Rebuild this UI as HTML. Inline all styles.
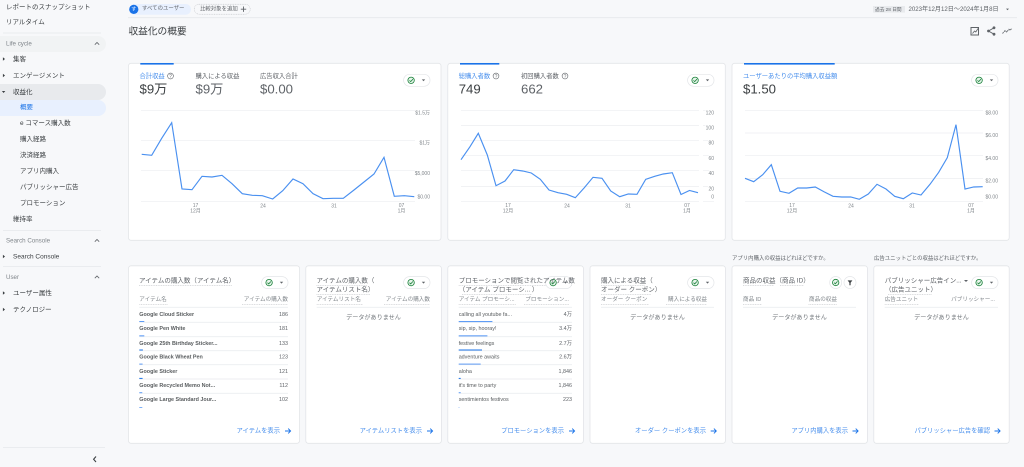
<!DOCTYPE html>
<html lang="ja"><head><meta charset="utf-8"><title>収益化の概要</title>
<style>
html,body{margin:0;padding:0;width:1024px;height:467px;overflow:hidden;background:#f7f8fa}
svg{display:block;filter:blur(.3px)}
text{font-family:"Liberation Sans","Noto Sans CJK JP",sans-serif;dominant-baseline:central;fill:#5f6368;font-size:6.3px;transform:translateY(.6px)}
.n{fill:#3c4043;font-size:6.5px}
.s{fill:#80868b;font-size:5px}
.h{fill:#80868b;font-size:6.2px}
.a{fill:#5f6368;font-size:5.6px}
.tt{fill:#5f6368;font-size:6.5px}
.b{fill:#1a73e8;font-size:6.3px;opacity:.8}
.m{fill:#3c4043;font-size:13.2px}
.g{fill:#5f6368;font-size:13.2px}
.r{fill:#3c4043;font-size:5.4px;font-weight:bold;opacity:.85}
.v{fill:#5f6368;font-size:5.4px}
.e{text-anchor:end}
.c{text-anchor:middle}
.card{fill:#fff;stroke:#e3e5e8;stroke-width:.8}
.grid{stroke:#eceef0;stroke-width:.7}
.line{fill:none;stroke:#4a90f0;stroke-width:1.15}
.dv{stroke:#e6e8eb;stroke-width:.8}
.dot{stroke:#b5b8bc;stroke-width:.5;stroke-dasharray:1 .7}
.rl{stroke:#eceef0;stroke-width:.9}
.bar{fill:#5f9cf5}
</style></head>
<body>
<svg width="1024" height="467" viewBox="0 0 1024 467" xmlns="http://www.w3.org/2000/svg">
<defs>
<g id="pill"><rect x=".3" y=".3" width="26.4" height="12" rx="6" fill="#fff" stroke="#e3e5e8" stroke-width=".7"/><circle cx="7.8" cy="6.3" r="3.2" fill="#e6f4ea" stroke="#188038" stroke-width=".8"/><path d="M6.2 6.4l1.2 1.2 2.2-2.4" fill="none" stroke="#188038" stroke-width=".8"/><path d="M18.5 5.4h3.4l-1.7 1.9z" fill="#5f6368"/></g>
<g id="help"><circle r="2.9" fill="none" stroke="#5f6368" stroke-width=".6"/><path d="M-1-.8a1 1 0 1 1 1.6.8c-.4.3-.6.5-.6 1M0 1.6v.4" fill="none" stroke="#5f6368" stroke-width=".5"/></g>
<path id="arrow" d="M-3 0H2.4M.2-2.4L2.6 0 .2 2.4" fill="none" stroke="#1a73e8" stroke-width=".9"/>
<path id="tri" d="M-1.1-1.7L1 0l-2.1 1.7z" fill="#3c4043"/>
<path id="up" d="M-2.2 1.2L0-1l2.2 2.2" fill="none" stroke="#5f6368" stroke-width=".8"/>
</defs>

<!-- sidebar -->
<text x="6" y="7" class="n">レポートのスナップショット</text>
<text x="6" y="22" class="n">リアルタイム</text>
<line x1="3" y1="33" x2="101" y2="33" class="dv"/>
<path d="M0 36H98a8 8 0 0 1 0 16H0z" fill="#f1f3f4"/>
<text x="6" y="43.5" class="h">Life cycle</text><use href="#up" x="97" y="43.5"/>
<use href="#tri" x="4" y="59"/><text x="13" y="59" class="n">集客</text>
<use href="#tri" x="4" y="75.5"/><text x="13" y="75.5" class="n">エンゲージメント</text>
<path d="M0 84H98a8 8 0 0 1 0 16H0z" fill="#e8eaed"/>
<path d="M2.4 91l1.7 2 1.7-2z" transform="translate(-.5 0)" fill="#3c4043"/><text x="13" y="92" class="n">収益化</text>
<path d="M0 100H98a8 8 0 0 1 0 16H0z" fill="#e8f0fe"/>
<text x="20" y="107" class="n" style="fill:#1a73e8">概要</text>
<text x="20" y="123" class="n">e コマース購入数</text>
<text x="20" y="139" class="n">購入経路</text>
<text x="20" y="155" class="n">決済経路</text>
<text x="20" y="171" class="n">アプリ内購入</text>
<text x="20" y="187" class="n">パブリッシャー広告</text>
<text x="20" y="203" class="n">プロモーション</text>
<text x="13" y="219" class="n">維持率</text>
<line x1="3" y1="230.5" x2="101" y2="230.5" class="dv"/>
<text x="6" y="240.5" class="h">Search Console</text><use href="#up" x="97" y="240.5"/>
<use href="#tri" x="4" y="256.5"/><text x="13" y="256.5" class="n">Search Console</text>
<line x1="3" y1="266.5" x2="101" y2="266.5" class="dv"/>
<text x="6" y="277" class="h">User</text><use href="#up" x="97" y="277"/>
<use href="#tri" x="4" y="293"/><text x="13" y="293" class="n">ユーザー属性</text>
<use href="#tri" x="4" y="309.5"/><text x="13" y="309.5" class="n">テクノロジー</text>
<line x1="3" y1="447.5" x2="105" y2="447.5" class="dv"/>
<path d="M96 456.5L93.6 459.3 96 462" fill="none" stroke="#3c4043" stroke-width="1.1"/>

<!-- top bar -->
<rect x="129" y="4" width="62" height="10.7" rx="5.3" fill="#e8f0fe"/>
<circle cx="133.8" cy="9.4" r="4.6" fill="#1a73e8"/><text x="133.8" y="9" class="c" style="font-size:5px;fill:#fff">す</text>
<text x="142" y="8.5" style="font-size:5.4px">すべてのユーザー</text>
<rect x="194.2" y="4.2" width="56" height="10" rx="5" fill="none" stroke="#b5b8bc" stroke-width=".5" stroke-dasharray="1 .7"/>
<text x="200" y="8.7" style="font-size:5.4px">比較対象を追加</text>
<path d="M243.5 6.5v5.4M240.8 9.2h5.4" stroke="#5f6368" stroke-width=".9"/>
<line x1="128" y1="17.7" x2="1017" y2="17.7" class="dv"/>
<rect x="873" y="6" width="32" height="6.6" fill="#e8eaed"/>
<text x="875" y="8.8" style="font-size:4.7px">過去 28 日間</text>
<text x="908.5" y="8.9" style="font-size:6.1px">2023年12月12日～2024年1月8日</text>
<path d="M1006 8.6h3l-1.5 1.7z" fill="#5f6368"/>
<text x="128.5" y="31.2" style="font-size:9.7px;fill:#3c4043">収益化の概要</text>
<g fill="none" stroke="#5f6368" stroke-width=".9">
<rect x="971" y="27.5" width="7.5" height="7.5" stroke-width="1"/><path d="M972.5 33.5l2-2.5 1.3 1 2.2-3.5" stroke-width=".8"/>
<path d="M994 27.8L988.5 31l5.5 3.2" />
</g>
<circle cx="994" cy="27.8" r="1.4" fill="#5f6368"/><circle cx="988.5" cy="31" r="1.4" fill="#5f6368"/><circle cx="994" cy="34.2" r="1.4" fill="#5f6368"/>
<path d="M1002.5 33.5l2.6-3 1.6 1.5 2.2-2.7 1.2 1 1.8-2" fill="none" stroke="#5f6368" stroke-width=".9" stroke-dasharray="1.7 .6"/>

<!-- metric cards -->
<rect x="128.5" y="63.3" width="312.5" height="177" rx="2.5" class="card"/>
<rect x="447.8" y="63.3" width="277.5" height="177" rx="2.5" class="card"/>
<rect x="732" y="63.3" width="277.2" height="177" rx="2.5" class="card"/>
<rect x="140.3" y="63" width="33.4" height="1.6" fill="#1a73e8"/>
<rect x="460" y="63" width="39.3" height="1.6" fill="#1a73e8"/>
<rect x="744" y="63" width="90.7" height="1.6" fill="#1a73e8"/>

<text x="139.5" y="76" class="b">合計収益</text><use href="#help" x="170.5" y="76"/>
<text x="139.5" y="88.5" class="m">$9万</text>
<text x="195.5" y="76">購入による収益</text><text x="195.5" y="88.5" class="g">$9万</text>
<text x="260" y="76">広告収入合計</text><text x="260" y="88.5" class="g">$0.00</text>

<text x="458.7" y="76" class="b">総購入者数</text><use href="#help" x="496" y="76"/>
<text x="458.7" y="88.5" class="m">749</text>
<text x="521" y="76">初回購入者数</text><use href="#help" x="565" y="76"/>
<text x="521" y="88.5" class="g">662</text>

<text x="743" y="76" class="b">ユーザーあたりの平均購入収益額</text>
<text x="743" y="88.5" class="m">$1.50</text>

<use href="#pill" x="403.3" y="74"/><use href="#pill" x="687.3" y="74"/><use href="#pill" x="971.3" y="74"/>

<!-- chart 1 -->
<g class="grid"><line x1="141" y1="110.3" x2="430" y2="110.3"/><line x1="141" y1="140.3" x2="430" y2="140.3"/><line x1="141" y1="170.7" x2="430" y2="170.7"/><line x1="141" y1="201.3" x2="430" y2="201.3"/></g>
<rect x="415" y="108" width="15" height="95" fill="#fff"/>
<polyline class="line" points="141.7,154.3 151.7,155.3 161.7,138.3 171.7,122.7 182,189 192,189.7 202,176.3 212,177 222,175.3 232,183.7 242.3,193.7 252.3,195.3 262.3,195.7 272.7,199 282.7,190.7 293,179 303,183.7 313,193.7 323,198.7 333.3,198.3 343.3,198.3 354,190 364,182 374,174 384,157.3 394.3,196.3 404.3,195.7 414.3,196.7"/>
<text x="430" y="113" class="s e">$1.5万</text><text x="430" y="143" class="s e">$1万</text><text x="430" y="173.5" class="s e">$5,000</text><text x="430" y="197" class="s e">$0.00</text>
<text x="195.5" y="205.5" class="s c">17</text><text x="195.5" y="211" class="s c">12月</text><text x="263" y="206" class="s c">24</text><text x="334" y="206" class="s c">31</text><text x="401.5" y="205.5" class="s c">07</text><text x="401.5" y="211" class="s c">1月</text>

<!-- chart 2 -->
<g class="grid"><line x1="461" y1="110.3" x2="714" y2="110.3"/><line x1="461" y1="125.5" x2="714" y2="125.5"/><line x1="461" y1="140.3" x2="714" y2="140.3"/><line x1="461" y1="155.3" x2="714" y2="155.3"/><line x1="461" y1="170.7" x2="714" y2="170.7"/><line x1="461" y1="186.5" x2="714" y2="186.5"/><line x1="461" y1="201.3" x2="714" y2="201.3"/></g>
<rect x="699" y="108" width="4" height="95" fill="#fff"/>
<polyline class="line" points="461,159.7 470,146.7 478.3,133.3 487.3,155 496,185.7 505,181 513.7,169.7 522.7,171 531.3,173 540.3,179.3 549,190 558,192.7 566.7,194.3 575.3,197.7 584.3,187.7 593,177.3 602,178.3 610.7,191 619.7,196.7 628.3,194 637,194.3 645.7,179.3 654.7,176.3 663.3,174 672.3,172.7 681,194.5 689.5,190.5 698,192.7"/>
<g><text x="714" y="113" class="s e" style="paint-order:stroke;stroke:#fff;stroke-width:2">120</text><text x="714" y="128" class="s e" style="paint-order:stroke;stroke:#fff;stroke-width:2">100</text><text x="714" y="143" class="s e" style="paint-order:stroke;stroke:#fff;stroke-width:2">80</text><text x="714" y="158.5" class="s e" style="paint-order:stroke;stroke:#fff;stroke-width:2">60</text><text x="714" y="173.5" class="s e" style="paint-order:stroke;stroke:#fff;stroke-width:2">40</text><text x="714" y="189" class="s e" style="paint-order:stroke;stroke:#fff;stroke-width:2">20</text><text x="714" y="197" class="s e" style="paint-order:stroke;stroke:#fff;stroke-width:2">0</text></g>
<text x="508" y="205.5" class="s c">17</text><text x="508" y="211" class="s c">12月</text><text x="567" y="206" class="s c">24</text><text x="628" y="206" class="s c">31</text><text x="687" y="205.5" class="s c">07</text><text x="687" y="211" class="s c">1月</text>

<!-- chart 3 -->
<g class="grid"><line x1="745" y1="110.3" x2="998" y2="110.3"/><line x1="745" y1="133" x2="998" y2="133"/><line x1="745" y1="155.3" x2="998" y2="155.3"/><line x1="745" y1="178.5" x2="998" y2="178.5"/><line x1="745" y1="201.3" x2="998" y2="201.3"/></g>
<rect x="983" y="108" width="15" height="95" fill="#fff"/>
<polyline class="line" points="745,178.3 753.7,181.7 762.7,174.7 771.3,164.7 780,191.3 789,193.3 797.7,188 806.7,188 815.3,187 824,191.7 833,196.3 841.7,197 850.7,197 859.3,199.3 868.3,194 877,184.3 886,189 894.7,196.3 903.3,198.7 912.3,193 921,195 930,184.3 938.7,172.3 947.3,157.7 956,124.7 965,189 973.7,187 982.7,186.7"/>
<text x="998" y="113" class="s e">$8.00</text><text x="998" y="135.5" class="s e">$6.00</text><text x="998" y="158.5" class="s e">$4.00</text><text x="998" y="181" class="s e">$2.00</text><text x="998" y="197" class="s e">$0.00</text>
<text x="792" y="205.5" class="s c">17</text><text x="792" y="211" class="s c">12月</text><text x="851" y="206" class="s c">24</text><text x="912" y="206" class="s c">31</text><text x="971" y="205.5" class="s c">07</text><text x="971" y="211" class="s c">1月</text>

<!-- bottom captions -->
<text x="732" y="258.5" style="font-size:5.4px">アプリ内購入の収益はどれほどですか。</text>
<text x="874" y="258.5" style="font-size:5.4px">広告ユニットごとの収益はどれほどですか。</text>

<!-- bottom cards -->
<rect x="128.5" y="265.8" width="171" height="177.5" rx="2.5" class="card"/>
<rect x="305.8" y="265.8" width="135.6" height="177.5" rx="2.5" class="card"/>
<rect x="447.8" y="265.8" width="135.6" height="177.5" rx="2.5" class="card"/>
<rect x="590" y="265.8" width="135.4" height="177.5" rx="2.5" class="card"/>
<rect x="732" y="265.8" width="135.4" height="177.5" rx="2.5" class="card"/>
<rect x="873.8" y="265.8" width="135.4" height="177.5" rx="2.5" class="card"/>

<!-- card A -->
<text x="139" y="280.5" class="tt">アイテムの購入数（アイテム名）</text>
<line x1="139" y1="285.5" x2="232" y2="285.5" class="dot"/>
<use href="#pill" x="261.3" y="276.3"/>
<text x="139.3" y="299.5" class="a" style="fill:#80868b">アイテム名</text><text x="288" y="299.5" class="a e" style="fill:#80868b">アイテムの購入数</text>
<line x1="139.3" y1="304.5" x2="168" y2="304.5" class="dot"/><line x1="242" y1="304.5" x2="288" y2="304.5" class="dot"/>
<line x1="139.3" y1="307.3" x2="288" y2="307.3" class="rl"/>
<text x="139.3" y="314.2" class="r">Google Cloud Sticker</text><text x="288" y="314.2" class="v e">186</text><line x1="139.3" y1="322.3" x2="288" y2="322.3" class="rl"/><rect x="139.3" y="321" width="5" height="1" class="bar"/>
<text x="139.3" y="328.5" class="r">Google Pen White</text><text x="288" y="328.5" class="v e">181</text><line x1="139.3" y1="336.7" x2="288" y2="336.7" class="rl"/><rect x="139.3" y="335.3" width="5" height="1.1" class="bar"/>
<text x="139.3" y="343.2" class="r">Google 25th Birthday Sticker...</text><text x="288" y="343.2" class="v e">133</text><line x1="139.3" y1="350.7" x2="288" y2="350.7" class="rl"/><rect x="139.3" y="349.5" width="3.6" height="1" fill="#1a73e8"/>
<text x="139.3" y="356.8" class="r">Google Black Wheat Pen</text><text x="288" y="356.8" class="v e">123</text><line x1="139.3" y1="364.7" x2="288" y2="364.7" class="rl"/><rect x="139.3" y="363.6" width="3.3" height="1" class="bar"/>
<text x="139.3" y="371.5" class="r">Google Sticker</text><text x="288" y="371.5" class="v e">121</text><line x1="139.3" y1="379" x2="288" y2="379" class="rl"/><rect x="139.3" y="377.9" width="3.3" height="1" fill="#1a73e8"/>
<text x="139.3" y="385.2" class="r">Google Recycled Memo Not...</text><text x="288" y="385.2" class="v e">112</text><line x1="139.3" y1="393.3" x2="288" y2="393.3" class="rl"/><rect x="139.3" y="392.2" width="3" height="1" class="bar"/>
<text x="139.3" y="399.5" class="r">Google Large Standard Jour...</text><text x="288" y="399.5" class="v e">102</text><rect x="139.3" y="407" width="3" height=".8" class="bar"/>
<text x="280" y="430.5" class="b e">アイテムを表示</text><use href="#arrow" x="288" y="431"/>

<!-- card B -->
<text x="316.5" y="280.5" class="tt">アイテムの購入数（</text>
<text x="316.5" y="289.5" class="tt">アイテムリスト名）</text>
<line x1="316.5" y1="285.5" x2="367" y2="285.5" class="dot"/><line x1="316.5" y1="294.5" x2="370" y2="294.5" class="dot"/>
<use href="#pill" x="403.3" y="276.3"/>
<text x="316.7" y="299.5" class="a" style="fill:#80868b">アイテムリスト名</text><text x="430" y="299.5" class="a e" style="fill:#80868b">アイテムの購入数</text>
<line x1="316.7" y1="304.5" x2="363" y2="304.5" class="dot"/><line x1="384" y1="304.5" x2="430" y2="304.5" class="dot"/>
<line x1="316.7" y1="307.3" x2="430" y2="307.3" class="rl"/>
<text x="373.5" y="317.5" class="c" style="font-size:6.1px;fill:#70757a">データがありません</text>
<text x="422" y="430.5" class="b e">アイテムリストを表示</text><use href="#arrow" x="430" y="431"/>

<!-- card C -->
<line x1="458.7" y1="285.5" x2="572" y2="285.5" class="dot"/><line x1="462" y1="294.5" x2="532" y2="294.5" class="dot"/>
<use href="#pill" x="545.3" y="276.3"/>
<text x="458.7" y="280.5" class="tt">プロモーションで閲覧されたアイテム数</text>
<text x="458.7" y="289.5" class="tt">（アイテム プロモーシ... ）</text>
<text x="458.7" y="299.5" class="a" style="fill:#80868b">アイテム プロモーシ...</text><text x="569" y="299.5" class="a e" style="fill:#80868b">プロモーション...</text>
<line x1="458.7" y1="304.5" x2="516" y2="304.5" class="dot"/><line x1="524" y1="304.5" x2="569" y2="304.5" class="dot"/>
<line x1="458.7" y1="307.3" x2="572" y2="307.3" class="rl"/>
<text x="458.7" y="314.2" class="r" style="font-weight:normal">calling all youtube fa...</text><text x="572" y="314.2" class="v e">4万</text><line x1="458.7" y1="322.3" x2="572" y2="322.3" class="rl"/><rect x="458.7" y="321" width="33.7" height="1.1" class="bar"/>
<text x="458.7" y="328.5" class="r" style="font-weight:normal">sip, sip, hooray!</text><text x="572" y="328.5" class="v e">3.4万</text><line x1="458.7" y1="336.7" x2="572" y2="336.7" class="rl"/><rect x="458.7" y="335.3" width="28.7" height="1.1" class="bar"/>
<text x="458.7" y="343.2" class="r" style="font-weight:normal">festive feelings</text><text x="572" y="343.2" class="v e">2.7万</text><line x1="458.7" y1="350.7" x2="572" y2="350.7" class="rl"/><rect x="458.7" y="349.5" width="23.3" height="1" fill="#1a73e8"/>
<text x="458.7" y="356.8" class="r" style="font-weight:normal">adventure awaits</text><text x="572" y="356.8" class="v e">2.6万</text><line x1="458.7" y1="364.7" x2="572" y2="364.7" class="rl"/><rect x="458.7" y="363.6" width="22" height="1" class="bar"/>
<text x="458.7" y="371.5" class="r" style="font-weight:normal">aloha</text><text x="572" y="371.5" class="v e">1,846</text><line x1="458.7" y1="379" x2="572" y2="379" class="rl"/><rect x="458.7" y="377.9" width="2" height="1" fill="#1a73e8"/>
<text x="458.7" y="385.2" class="r" style="font-weight:normal">it's time to party</text><text x="572" y="385.2" class="v e">1,846</text><line x1="458.7" y1="393.3" x2="572" y2="393.3" class="rl"/><rect x="458.7" y="392.2" width="2" height="1" class="bar"/>
<text x="458.7" y="399.5" class="r" style="font-weight:normal">sentimientos festivos</text><text x="572" y="399.5" class="v e">223</text><rect x="458.7" y="407" width=".6" height=".8" class="bar"/>
<text x="564" y="430.5" class="b e">プロモーションを表示</text><use href="#arrow" x="572" y="431"/>

<!-- card D -->
<text x="601" y="280.5" class="tt">購入による収益（</text>
<text x="601" y="289.5" class="tt">オーダー クーポン）</text>
<line x1="601" y1="285.5" x2="645" y2="285.5" class="dot"/><line x1="601" y1="294.5" x2="651" y2="294.5" class="dot"/>
<use href="#pill" x="687.3" y="276.3"/>
<text x="601" y="299.5" class="a" style="fill:#80868b">オーダー クーポン</text><text x="707" y="299.5" class="a e" style="fill:#80868b">購入による収益</text>
<line x1="601" y1="304.5" x2="649" y2="304.5" class="dot"/><line x1="666" y1="304.5" x2="707" y2="304.5" class="dot"/>
<line x1="601" y1="307.3" x2="714" y2="307.3" class="rl"/>
<text x="657.5" y="317.5" class="c" style="font-size:6.1px;fill:#70757a">データがありません</text>
<text x="706" y="430.5" class="b e">オーダー クーポンを表示</text><use href="#arrow" x="713.7" y="431"/>

<!-- card E -->
<text x="743" y="280.5" class="tt">商品の収益（商品 ID）</text>
<line x1="743" y1="285.5" x2="774" y2="285.5" class="dot"/><line x1="780" y1="285.5" x2="804" y2="285.5" class="dot"/>
<circle cx="835.7" cy="282.5" r="6" fill="#fff" stroke="#e3e5e8" stroke-width=".7"/>
<circle cx="835.7" cy="282.5" r="3.2" fill="#e6f4ea" stroke="#188038" stroke-width=".8"/><path d="M834.1 282.6l1.2 1.2 2.2-2.4" fill="none" stroke="#188038" stroke-width=".8"/>
<circle cx="850" cy="282.5" r="6" fill="#fff" stroke="#e3e5e8" stroke-width=".7"/><path d="M847.6 280.4h4.8l-1.8 2.4v2.4h-1.2v-2.4z" fill="#3c4043"/>
<text x="743" y="299.5" class="a" style="fill:#80868b">商品 ID</text><text x="837" y="299.5" class="a e" style="fill:#80868b">商品の収益</text>
<line x1="743" y1="304.5" x2="762" y2="304.5" class="dot"/><line x1="808.5" y1="304.5" x2="837" y2="304.5" class="dot"/>
<line x1="743" y1="307.3" x2="856" y2="307.3" class="rl"/>
<text x="799.5" y="317.5" class="c" style="font-size:6.1px;fill:#70757a">データがありません</text>
<text x="848" y="430.5" class="b e">アプリ内購入を表示</text><use href="#arrow" x="855.5" y="431"/>

<!-- card F -->
<text x="884.7" y="280.5" class="tt">パブリッシャー広告イン...</text>
<path d="M964 280h4l-2 2z" fill="#5f6368"/>
<text x="885" y="289.5" class="tt">（広告ユニット）</text>
<line x1="888" y1="294.5" x2="932" y2="294.5" class="dot"/>
<use href="#pill" x="971.3" y="276.3"/>
<text x="884.7" y="299.5" class="a" style="fill:#80868b">広告ユニット</text><text x="995" y="299.5" class="a e" style="fill:#80868b">パブリッシャー...</text>
<line x1="884.7" y1="304.5" x2="919" y2="304.5" class="dot"/>
<line x1="884.7" y1="307.3" x2="998" y2="307.3" class="rl"/>
<text x="941.5" y="317.5" class="c" style="font-size:6.1px;fill:#70757a">データがありません</text>
<text x="990" y="430.5" class="b e">パブリッシャー広告を確認</text><use href="#arrow" x="997.5" y="431"/>
</svg>
</body></html>
